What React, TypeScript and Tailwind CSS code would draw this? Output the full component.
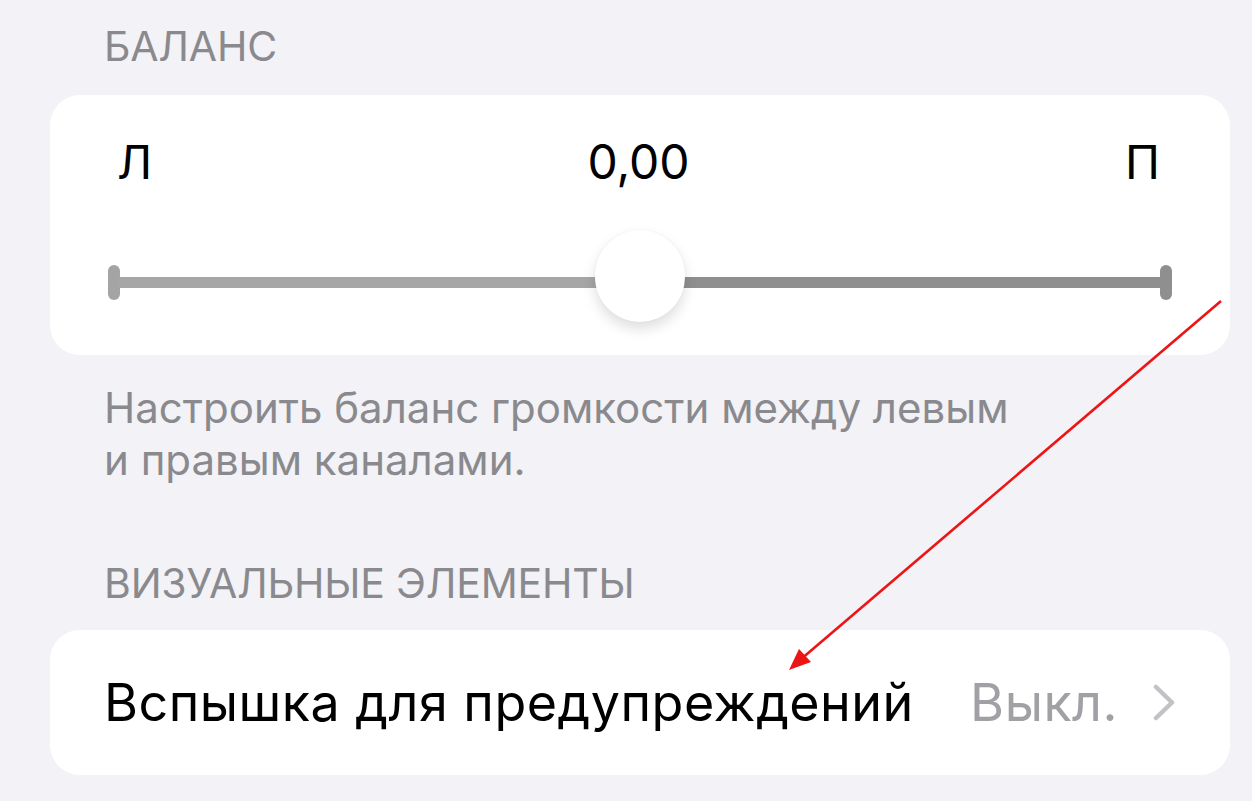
const font = { fontFamily: "Inter, 'Noto Sans', sans-serif" };

function SectionHeader({ children }: { children: React.ReactNode }) {
  return (
    <div className="pl-[104px] text-[41px] leading-[50px] text-[#8a8a8e] tracking-[-0.2px]">
      {children}
    </div>
  );
}

function BalanceCard() {
  return (
    <div className="ml-[50px] mr-[22px] h-[260px] rounded-[30px] bg-white px-[58px] pt-[42px]">
      <div className="grid grid-cols-[1fr_auto_1fr] items-center pl-[9px] pr-[12px] text-[47px] leading-[50px] text-black">
        <span>Л</span>
        <span className="text-[48px]">0,00</span>
        <span className="justify-self-end">П</span>
      </div>
      <div className="relative mt-[75px] flex h-[40px] items-center">
        <div className="h-[35px] w-[12px] rounded-full bg-[#a4a4a4]" />
        <div className="-mx-[2px] h-[11px] flex-1 bg-[#a6a6a6]" />
        <div className="-mx-[2px] h-[11px] flex-1 bg-[#8f8f8f]" />
        <div className="h-[35px] w-[12px] rounded-full bg-[#8f8f8f]" />
        <div className="absolute left-1/2 top-[-32px] h-[92px] w-[90px] -translate-x-1/2 rounded-full bg-white shadow-[0_7px_14px_rgba(0,0,0,0.13),0_0_2px_rgba(0,0,0,0.06)]" />
      </div>
    </div>
  );
}

function Chevron() {
  return (
    <svg width="22" height="37" viewBox="0 0 22 37" className="ml-[35px]">
      <polyline
        points="3,3 19,18.5 3,34"
        fill="none"
        stroke="#c2c2c6"
        strokeWidth="4.5"
        strokeLinecap="round"
        strokeLinejoin="round"
      />
    </svg>
  );
}

function AlertRow() {
  return (
    <div className="ml-[50px] mr-[22px] flex h-[145px] items-center rounded-[30px] bg-white pl-[54px] pr-[55px]">
      <span className="flex-1 text-[52px] leading-[60px] text-black tracking-[0.5px]">
        Вспышка для предупреждений
      </span>
      <span className="text-[52px] leading-[60px] text-[#a0a0a5] tracking-[0.5px]">Выкл.</span>
      <Chevron />
    </div>
  );
}

export default function App() {
  return (
    <div className="relative h-[801px] w-[1252px] overflow-hidden bg-[#f2f2f7]" style={font}>
      <div className="pt-[21px]">
        <SectionHeader>БАЛАНС</SectionHeader>
        <div className="mt-[24px]">
          <BalanceCard />
        </div>
        <p className="mt-[27px] pl-[104px] text-[42px] leading-[52px] text-[#8a8a8e]">
          Настроить баланс громкости между левым
          <br />
          и правым каналами.
        </p>
        <div className="mt-[72px]">
          <SectionHeader>ВИЗУАЛЬНЫЕ ЭЛЕМЕНТЫ</SectionHeader>
        </div>
        <div className="mt-[22px]">
          <AlertRow />
        </div>
      </div>

      {/* annotation arrow */}
      <svg
        className="pointer-events-none absolute left-0 top-0"
        width="1252"
        height="801"
        viewBox="0 0 1252 801"
      >
        <line x1="1221" y1="301" x2="800" y2="660" stroke="#ec1414" strokeWidth="2.6" />
        <polygon points="789,670 799,649 811,662" fill="#ec1414" />
      </svg>
    </div>
  );
}
